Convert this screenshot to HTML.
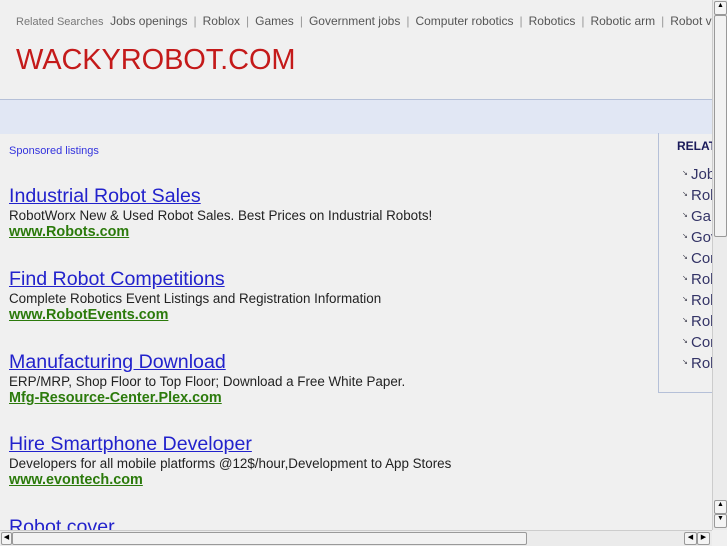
<!DOCTYPE html>
<html><head><style>
body{margin:0;width:727px;height:545px;overflow:hidden;background:#f0f0f0;font-family:"Liberation Sans",sans-serif;position:relative}
.top{position:absolute;left:16px;top:14px;font-size:12px;color:#555;white-space:nowrap}
.top span.s{color:#777;font-size:11px}
.top i{font-style:normal;color:#999;margin:0 6px}
.logo{position:absolute;left:16px;top:44px;font-size:29px;color:#c41a1a;letter-spacing:-0.1px}
.band{position:absolute;left:0;top:99px;width:712px;height:34px;background:#e1e7f4;border-top:1px solid #b5c0d8}
.sp{position:absolute;left:9px;top:145px;font-size:11px;color:#3333dd}
.ad{position:absolute;left:9px;white-space:nowrap}
.ad a{display:block;font-size:19.6px;color:#2222cc;text-decoration:underline;line-height:22px}
.ad p{margin:0;font-size:13.4px;color:#222;line-height:17px}
.ad b{display:block;font-size:14.4px;color:#2b7a0b;text-decoration:underline;line-height:17px}
.side{position:absolute;left:658px;top:133px;width:60px;height:259px;border-left:1px solid #b5c0d8;border-bottom:1px solid #b5c0d8}
.side h4{margin:0;position:absolute;left:18px;top:6px;font-size:12px;color:#1a1a5a}
.side div{position:absolute;left:32px;font-size:15px;color:#333366;white-space:nowrap}
.side div:before{content:"↘";font-size:7px;position:absolute;left:-9px;top:3px;color:#334}
.vs{position:absolute;left:712px;top:0;width:15px;height:530px;background:#ebebeb;border-left:1px solid #ccc}
.hs{position:absolute;left:0;top:530px;width:712px;height:15px;background:#ebebeb;border-top:1px solid #ccc}
.btn{position:absolute;background:#f4f4f4;border:1px solid #999;border-radius:2px;box-sizing:border-box;font-size:7px;text-align:center;color:#000}
</style></head><body>
<div class="top"><span class="s">Related Searches</span> &nbsp;Jobs openings<i>|</i>Roblox<i>|</i>Games<i>|</i>Government jobs<i>|</i>Computer robotics<i>|</i>Robotics<i>|</i>Robotic arm<i>|</i>Robot voice</div>
<div class="logo">WACKYROBOT.COM</div>
<div class="band"></div>
<div class="sp">Sponsored listings</div>
<div class="ad" style="top:185px"><a>Industrial Robot Sales</a><p>RobotWorx New &amp; Used Robot Sales. Best Prices on Industrial Robots!</p><b>www.Robots.com</b></div>
<div class="ad" style="top:268px"><a>Find Robot Competitions</a><p>Complete Robotics Event Listings and Registration Information</p><b>www.RobotEvents.com</b></div>
<div class="ad" style="top:351px"><a>Manufacturing Download</a><p>ERP/MRP, Shop Floor to Top Floor; Download a Free White Paper.</p><b>Mfg-Resource-Center.Plex.com</b></div>
<div class="ad" style="top:433px"><a>Hire Smartphone Developer</a><p>Developers for all mobile platforms @12$/hour,Development to App Stores</p><b>www.evontech.com</b></div>
<div class="ad" style="top:516px"><a>Robot cover</a></div>
<div class="side"><h4>RELATED</h4>
<div style="top:33px">Jobs</div><div style="top:54px">Roblox</div><div style="top:75px">Games</div><div style="top:96px">Gov</div><div style="top:117px">Computer</div><div style="top:138px">Robotics</div><div style="top:159px">Robotic</div><div style="top:180px">Robot</div><div style="top:201px">Computer</div><div style="top:222px">Robot</div></div>
<div class="vs">
<div class="btn" style="left:1px;top:1px;width:13px;height:14px">▲</div>
<div class="btn" style="left:1px;top:15px;width:13px;height:222px;background:#f2f2f2"></div>
<div class="btn" style="left:1px;top:500px;width:13px;height:14px">▲</div>
<div class="btn" style="left:1px;top:514px;width:13px;height:14px">▼</div>
</div>
<div class="hs">
<div class="btn" style="left:1px;top:1px;width:11px;height:13px">◀</div>
<div class="btn" style="left:12px;top:1px;width:515px;height:13px;background:#f2f2f2"></div>
<div class="btn" style="left:684px;top:1px;width:13px;height:13px">◀</div>
<div class="btn" style="left:697px;top:1px;width:13px;height:13px">▶</div>
</div>
</body></html>
